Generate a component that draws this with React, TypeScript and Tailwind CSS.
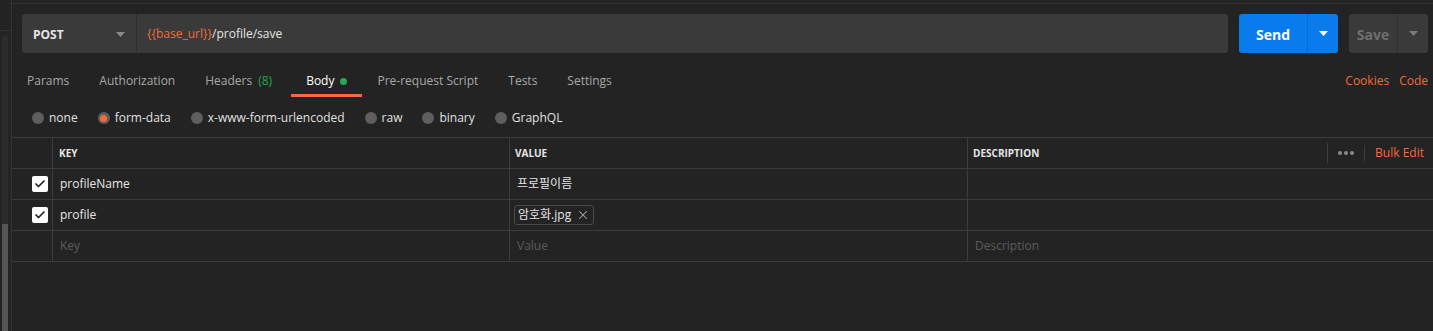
import React from 'react';
import { Check, X } from 'lucide-react';

const font = { fontFamily: '"Open Sans", "Noto Sans CJK KR", sans-serif' };

const Caret = ({ className }: { className: string }) => (
  <svg width="9" height="5" viewBox="0 0 9 5" className={className}>
    <path d="M0 0h9L4.5 5z" fill="currentColor" />
  </svg>
);

const tabs = [
  { label: 'Params' },
  { label: 'Authorization' },
  { label: 'Headers', count: '(8)' },
  { label: 'Body', active: true },
  { label: 'Pre-request Script' },
  { label: 'Tests' },
  { label: 'Settings' },
];

const bodyTypes = ['none', 'form-data', 'x-www-form-urlencoded', 'raw', 'binary', 'GraphQL'];

const Checkbox = () => (
  <div className="w-4 h-4 rounded-[2px] bg-white flex items-center justify-center">
    <Check className="w-3 h-3 text-[#222]" strokeWidth={3.5} />
  </div>
);

export default function App() {
  return (
    <div className="flex h-[331px] w-full bg-[#232323] text-[12px] overflow-hidden" style={font}>
      {/* left scroller strip */}
      <div className="w-3 shrink-0 border-r border-[#333] flex flex-col">
        <div className="h-[31px] border-b border-[#333]" />
        <div className="flex-1 flex flex-col pl-[2px] pr-[3px] pt-1">
          <div className="h-[189px] rounded-t-full bg-[#2b2b2b]" />
          <div className="flex-1 bg-[#555]" />
        </div>
      </div>

      <div className="flex-1 flex flex-col min-w-0">
        <div className="h-[4px] border-b border-[#333] shrink-0" />

        {/* url row */}
        <div className="flex items-center pl-[10px] pr-[5px] pt-[10px] h-[49px]">
          <div className="flex flex-1 h-[39px] rounded-[3px] bg-[#3a3a3a] min-w-0">
            <div className="w-[115px] flex items-center justify-between pl-[11px] pr-[11px] pt-[2px] border-r border-[#2f2f2f]">
              <span className="font-bold text-[#e6e6e6] text-[12px]">POST</span>
              <Caret className="text-[#8a8a8a]" />
            </div>
            <div className="flex items-center pl-[10px] pt-[1px] text-[12px]">
              <span className="text-[#f26b3a]">{'{{base_url}}'}</span>
              <span className="text-[#e6e6e6]">/profile/save</span>
            </div>
          </div>
          <div className="ml-[11px] flex h-[39px] w-[99px] rounded-[3px] bg-[#097bed]">
            <div className="w-[69px] flex items-center justify-center pt-[2px] text-white font-bold text-[14px] border-r border-[#0a6bd0]">
              Send
            </div>
            <div className="flex-1 flex items-center justify-center">
              <Caret className="text-white" />
            </div>
          </div>
          <div className="ml-[11px] flex h-[39px] w-[79px] rounded-[3px] bg-[#3a3a3a]">
            <div className="w-[49px] flex items-center justify-center pt-[2px] text-[#6f6f6f] font-bold text-[14px] border-r border-[#2f2f2f]">
              Save
            </div>
            <div className="flex-1 flex items-center justify-center">
              <Caret className="text-[#7a7a7a]" />
            </div>
          </div>
        </div>

        {/* tabs */}
        <div className="flex items-stretch h-[44px] pr-[5px]">
          {tabs.map((t) => (
            <div
              key={t.label}
              className={`flex items-center gap-[6px] pl-[15px] pt-[15px] border-b-[3px] ${
                t.count ? 'pr-[19px]' : 'pr-[15px]'
              } ${t.active ? 'border-[#f26b3a] text-white' : 'border-transparent text-[#a8a8a8]'}`}
            >
              <span>{t.label}</span>
              {t.count && <span className="text-[#26a65b]">{t.count}</span>}
              {t.active && <span className="w-[7px] h-[7px] rounded-full bg-[#26a65b]" />}
            </div>
          ))}
          <div className="flex-1" />
          <div className="flex items-center gap-[10px] pt-[15px] pb-[3px] text-[#f26b3a]">
            <span>Cookies</span>
            <span>Code</span>
          </div>
        </div>

        {/* body types */}
        <div className="flex items-center h-[40px] pl-5 pt-[2px] gap-5">
          {bodyTypes.map((b) => (
            <div key={b} className="flex items-center gap-[5px]">
              <span className="w-3 h-3 rounded-full bg-[#5e5e5e] flex items-center justify-center">
                {b === 'form-data' && <span className="w-[7px] h-[7px] rounded-full bg-[#f26b3a]" />}
              </span>
              <span className="text-[#e0e0e0]">{b}</span>
            </div>
          ))}
        </div>

        {/* table */}
        <div className="grid grid-cols-[40px_457px_458px_1fr] border-t border-[#3c3c3c] text-[12px]">
          {/* header */}
          <div className="h-[31px] border-b border-[#3c3c3c]" />
          <div className="h-[31px] border-b border-l border-[#3c3c3c] flex items-center pl-[6px] text-[10px] font-bold text-[#e6e6e6]">
            KEY
          </div>
          <div className="h-[31px] border-b border-l border-[#3c3c3c] flex items-center pl-[5px] text-[10px] font-bold text-[#e6e6e6]">
            VALUE
          </div>
          <div className="h-[31px] border-b border-l border-[#3c3c3c] flex items-center pl-[5px] pr-[9px]">
            <span className="text-[10px] font-bold text-[#e6e6e6] flex-1">DESCRIPTION</span>
            <span className="w-px h-[20px] bg-[#3c3c3c]" />
            <span className="flex gap-[2px] px-[10px]">
              <span className="w-[4px] h-[4px] rounded-full bg-[#8a8a8a]" />
              <span className="w-[4px] h-[4px] rounded-full bg-[#8a8a8a]" />
              <span className="w-[4px] h-[4px] rounded-full bg-[#8a8a8a]" />
            </span>
            <span className="w-px h-[16px] bg-[#3c3c3c]" />
            <span className="pl-[10px] text-[#f26b3a] text-[12px]">Bulk Edit</span>
          </div>

          {/* row 1 */}
          <div className="h-[31px] border-b border-[#3c3c3c] flex items-center justify-end pr-1">
            <Checkbox />
          </div>
          <div className="h-[31px] border-b border-l border-[#3c3c3c] flex items-center pl-[7px] text-[#e6e6e6]">
            profileName
          </div>
          <div className="h-[31px] border-b border-l border-[#3c3c3c] flex items-center pl-[7px] text-[#e6e6e6]">
            프로필이름
          </div>
          <div className="h-[31px] border-b border-l border-[#3c3c3c]" />

          {/* row 2 */}
          <div className="h-[31px] border-b border-[#3c3c3c] flex items-center justify-end pr-1">
            <Checkbox />
          </div>
          <div className="h-[31px] border-b border-l border-[#3c3c3c] flex items-center pl-[7px] text-[#e6e6e6]">
            profile
          </div>
          <div className="h-[31px] border-b border-l border-[#3c3c3c] flex items-center pl-[4px]">
            <div className="h-[20px] w-[80px] rounded-[3px] border border-[#4a4a4a] flex items-center pl-[3px] gap-[5px] text-[#e6e6e6]">
              <span>암호화.jpg</span>
              <X className="w-[14px] h-[14px] text-[#a8a8a8]" strokeWidth={1.75} />
            </div>
          </div>
          <div className="h-[31px] border-b border-l border-[#3c3c3c]" />

          {/* row 3 */}
          <div className="h-[31px] border-b border-[#3c3c3c]" />
          <div className="h-[31px] border-b border-l border-[#3c3c3c] flex items-center pl-[7px] text-[#5c5c5c]">
            Key
          </div>
          <div className="h-[31px] border-b border-l border-[#3c3c3c] flex items-center pl-[7px] text-[#5c5c5c]">
            Value
          </div>
          <div className="h-[31px] border-b border-l border-[#3c3c3c] flex items-center pl-[7px] text-[#5c5c5c]">
            Description
          </div>
        </div>
      </div>
    </div>
  );
}
